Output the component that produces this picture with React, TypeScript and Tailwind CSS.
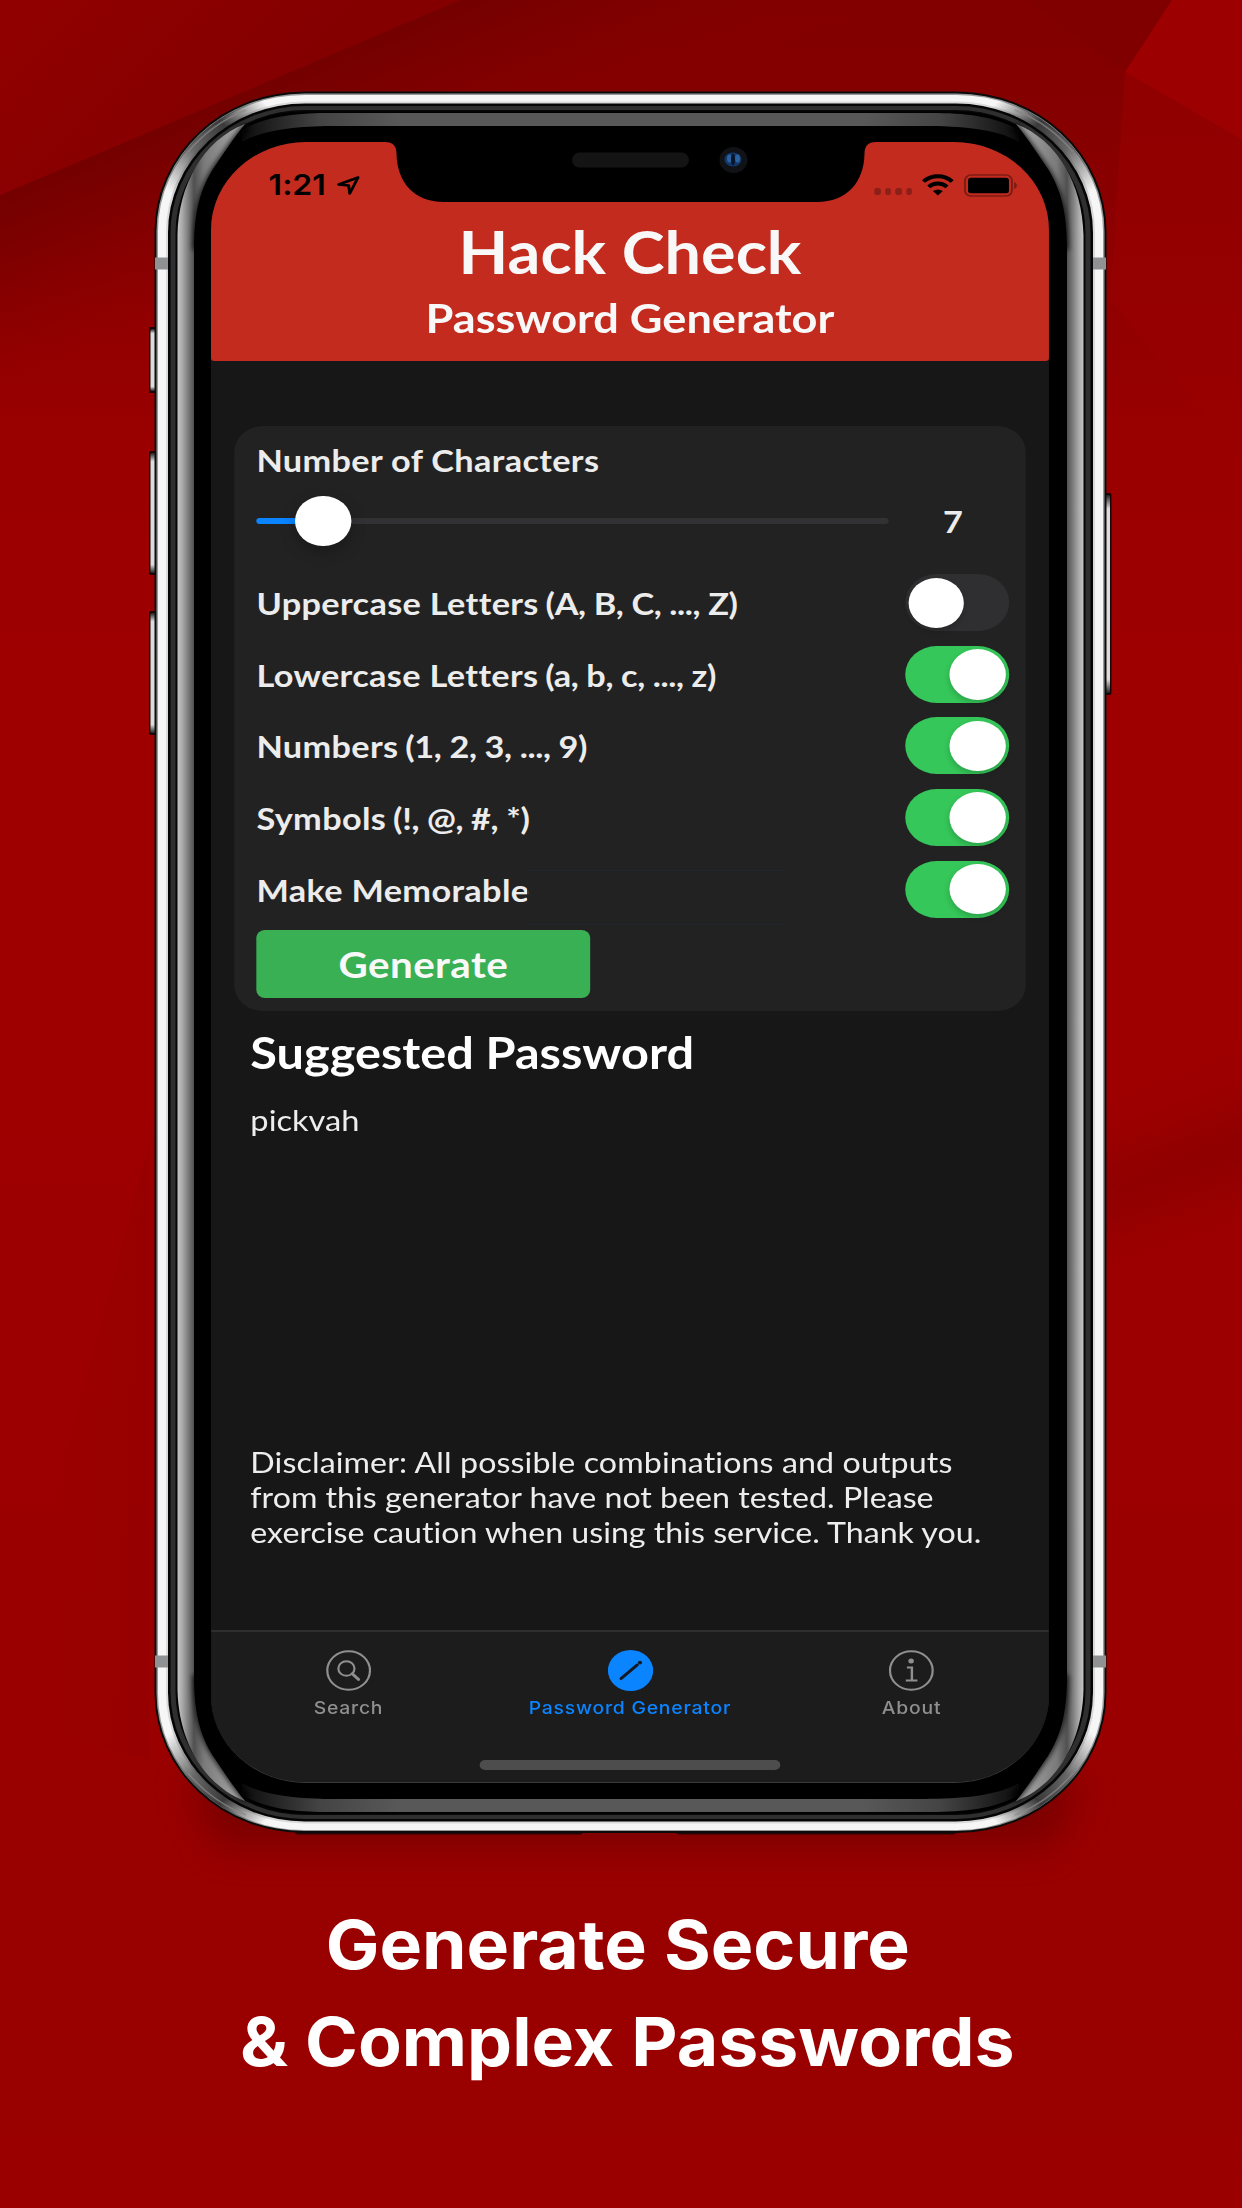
import React, { useState } from "react";

function Backdrop() {
  return (
    <svg className="absolute inset-0" width="1242" height="2208" viewBox="0 0 1242 2208" aria-hidden="true">
      <defs>
        <linearGradient id="base" x1="0" y1="0" x2="0" y2="1">
          <stop offset="0" stopColor="#820000" />
          <stop offset="0.05" stopColor="#850000" />
          <stop offset="0.12" stopColor="#8e0000" />
          <stop offset="0.2" stopColor="#9a0000" />
          <stop offset="0.3" stopColor="#9e0000" />
          <stop offset="0.5" stopColor="#9e0000" />
          <stop offset="0.85" stopColor="#990000" />
          <stop offset="1" stopColor="#9a0000" />
        </linearGradient>
        <linearGradient id="foldA" gradientUnits="userSpaceOnUse" x1="30" y1="0" x2="200" y2="170">
          <stop offset="0" stopColor="#910000" />
          <stop offset="1" stopColor="#840000" />
        </linearGradient>
        <linearGradient id="foldB" gradientUnits="userSpaceOnUse" x1="230" y1="97" x2="300" y2="262">
          <stop offset="0" stopColor="#740000" />
          <stop offset="0.35" stopColor="#7c0000" stopOpacity="0.8" />
          <stop offset="1" stopColor="#8a0000" stopOpacity="0" />
        </linearGradient>
        <linearGradient id="foldE" x1="0" y1="0" x2="1" y2="0">
          <stop offset="0" stopColor="#9e0000" stopOpacity="0" />
          <stop offset="1" stopColor="#930000" />
        </linearGradient>
        <filter id="shade" x="-20%" y="-200%" width="140%" height="500%">
          <feGaussianBlur stdDeviation="18" />
        </filter>
        <filter id="soft" x="-60%" y="-60%" width="220%" height="220%">
          <feGaussianBlur stdDeviation="28" />
        </filter>
      </defs>
      <rect width="1242" height="2208" fill="url(#base)" />
      <path d="M0 195L460 0H900V460H0Z" fill="url(#foldB)" />
      <path d="M0 0H460L0 195Z" fill="url(#foldA)" />
      <path d="M1025 0L1125 72L1172 0Z" fill="#800000" opacity="0.8" />
      <path d="M1172 0H1242V140L1125 72Z" fill="#9c0000" />
      <path d="M1125 72L1242 140V460L1110 300Z" fill="#9a0000" opacity="0.6" />
      <path d="M1060 1180L1300 1090V1160L1060 1240Z" fill="#880000" opacity="0.8" filter="url(#soft)" />
      <path d="M0 1700L150 1140V1760L0 1720Z" fill="url(#foldE)" opacity="0.6" />
      <path d="M185 1780H1085L1050 1846H220Z" fill="#6e0000" opacity="0.7" filter="url(#shade)" />
    </svg>
  );
}

function SideHighlight() {
  return (
    <g>
      <path
        d="M177.500 235C178.500 185 203 140 245 124C232 140 222 156 213 169C200 190 194 212 194 250V1675C194 1713 200 1735 213 1756C222 1769 232 1785 245 1801C203 1785 178.500 1740 177.500 1690Z"
        fill="url(#side)"
      />
      <g fill="none" stroke="#000" strokeWidth="9" opacity="0.75" filter="url(#feather)">
        <path d="M247 126C234 142 224 158 215 171C202 192 197 212 197 250" />
        <path d="M247 1799C234 1783 224 1767 215 1754C202 1733 197 1713 197 1675" />
      </g>
    </g>
  );
}

function TopHighlight() {
  return <path d="M242 130C266 116 296 113 330 113H931C965 113 995 116 1019 130V142C998 129 960 126 925 126H336C301 126 263 129 242 142Z" fill="url(#topFade)" />;
}

function CornerShade() {
  return (
    <g fill="none">
      <path d="M167 198A143 133 0 0 1 268 104" stroke="url(#corner)" strokeWidth="11" />
      <path d="M188 152A146 136 0 0 1 246 110" stroke="#8a8a8a" strokeWidth="1.500" opacity="0.7" />
    </g>
  );
}

function PhoneBody() {
  return (
    <svg className="absolute inset-0" width="1242" height="2208" viewBox="0 0 1242 2208" aria-hidden="true">
      <defs>
        <filter id="feather" x="-100%" y="-20%" width="300%" height="140%">
          <feGaussianBlur stdDeviation="2.500" />
        </filter>
        <linearGradient id="side" gradientUnits="userSpaceOnUse" x1="177" y1="0" x2="245" y2="0">
          <stop offset="0" stopColor="#c8c8c8" />
          <stop offset="0.08" stopColor="#a8a8a8" />
          <stop offset="0.25" stopColor="#505050" />
          <stop offset="0.4" stopColor="#7a7a7a" />
          <stop offset="1" stopColor="#b0b0b0" />
        </linearGradient>
        <linearGradient id="topFade" gradientUnits="userSpaceOnUse" x1="242" y1="0" x2="1019" y2="0">
          <stop offset="0" stopColor="#0c0c0c" />
          <stop offset="0.1" stopColor="#444" />
          <stop offset="0.2" stopColor="#585858" />
          <stop offset="0.8" stopColor="#585858" />
          <stop offset="0.9" stopColor="#444" />
          <stop offset="1" stopColor="#0c0c0c" />
        </linearGradient>
        <linearGradient id="corner" gradientUnits="userSpaceOnUse" x1="168" y1="190" x2="266" y2="104">
          <stop offset="0" stopColor="#3a3a3a" stopOpacity="0" />
          <stop offset="0.35" stopColor="#3a3a3a" stopOpacity="0.75" />
          <stop offset="0.65" stopColor="#3a3a3a" stopOpacity="1" />
          <stop offset="1" stopColor="#3a3a3a" stopOpacity="0" />
        </linearGradient>
        <linearGradient id="key" x1="0" y1="0" x2="0" y2="1">
          <stop offset="0" stopColor="#222" />
          <stop offset="0.07" stopColor="#dcdcdc" />
          <stop offset="0.93" stopColor="#dcdcdc" />
          <stop offset="1" stopColor="#222" />
        </linearGradient>
      </defs>
      {[[327, 66], [451, 124], [611, 124]].map(([y, h]) => (
        <g key={y}>
          <rect x="149" y={y} width="9" height={h} rx="2" fill="#1a0606" />
          <rect x="150.500" y={y + 2} width="5.500" height={h - 4} rx="1.500" fill="url(#key)" />
        </g>
      ))}
      <rect x="1102" y="493" width="9.500" height="202" rx="2" fill="#1a0606" />
      <rect x="1105" y="495" width="5" height="198" rx="1.500" fill="url(#key)" />
      <rect x="295" y="1826" width="288" height="8.500" rx="3" fill="#2a0505" />
      <rect x="676" y="1826" width="280" height="8.500" rx="3" fill="#2a0505" />

      <rect x="154.500" y="91.500" width="952" height="1741.500" rx="150" ry="140" fill="#0b0b0b" />
      <rect x="156.500" y="93.500" width="948" height="1737.500" rx="148" ry="138" fill="#9a9a9a" />
      <rect x="158" y="95" width="945" height="1735" rx="146.500" ry="136.500" fill="#f6f6f6" />
      <rect x="166" y="101.500" width="929" height="1722" rx="139" ry="130" fill="#dadada" />
      <CornerShade />
      <g transform="matrix(-1 0 0 1 1261 0)"><CornerShade /></g>
      <g transform="matrix(1 0 0 -1 0 1925)"><CornerShade /></g>
      <g transform="matrix(-1 0 0 -1 1261 1925)"><CornerShade /></g>
      <rect x="155" y="257.500" width="14" height="12" fill="#909192" />
      <rect x="1092" y="257.500" width="14" height="12" fill="#909192" />
      <rect x="155" y="1655.500" width="14" height="12" fill="#909192" />
      <rect x="1092" y="1655.500" width="14" height="12" fill="#909192" />
      <rect x="168" y="103.500" width="925" height="1718" rx="137" ry="129" fill="#050505" />
      <rect x="170.500" y="106" width="920" height="1713" rx="134" ry="127" fill="#2f2f2f" />
      <rect x="175.500" y="110" width="910" height="1705" rx="130" ry="123" fill="#060606" />
      <rect x="177" y="111.500" width="907" height="1702" rx="128" ry="121" fill="#000" />
      <TopHighlight />
      <g transform="matrix(1 0 0 -1 0 1925)"><TopHighlight /></g>
      <SideHighlight />
      <g transform="matrix(-1 0 0 1 1261 0)"><SideHighlight /></g>
    </svg>
  );
}

function Notch() {
  return (
    <svg className="absolute left-[380px] top-[138px]" width="501" height="70" viewBox="380 138 501 70" aria-hidden="true">
      <path d="M380 138V142H385C393 142 396.500 146 396.500 154C397 182 414 202 444 202H817C847 202 864 182 864.500 154C864.500 146 868 142 876 142H881V138Z" fill="#000" />
      <rect x="572" y="152.500" width="117" height="15" rx="7.500" fill="#141414" />
      <ellipse cx="733.500" cy="160" rx="14" ry="13" fill="#111216" />
      <ellipse cx="733" cy="159.500" rx="8.500" ry="7" fill="#12386b" />
      <ellipse cx="729.500" cy="158.500" rx="2.500" ry="4" fill="#2a62a0" />
      <ellipse cx="737.500" cy="158.500" rx="2.500" ry="4" fill="#2a62a0" />
      <ellipse cx="733" cy="159.500" rx="2" ry="6" fill="#081427" />
    </svg>
  );
}

function StatusBar() {
  return (
    <div className="flex h-[82px] items-end pb-[26px] pl-[52px] pr-[27px] text-black">
      <span className="w-[52px] font-[Inter] text-[29px] font-semibold leading-[26px]">1:21</span>
      <svg className="ml-[9.500px] mb-[3px]" width="21" height="19" viewBox="0 0 21 19" fill="none" stroke="#000" strokeWidth="2.600" strokeLinejoin="round">
        <path d="M19 1.500L1.500 8.500L10.500 9.500L11.500 17.500Z" />
      </svg>
      <div className="ml-auto flex items-end gap-[4px] pb-[3px] pr-[9px]">
        {[0, 1, 2, 3].map((i) => (
          <span key={i} className="h-[7px] w-[5.500px] rounded-[2px] bg-[#8c1f17]" />
        ))}
      </div>
      <svg className="mb-[2px]" width="29" height="22" viewBox="0 0 29 22" fill="none" stroke="#000" strokeWidth="3.800">
        <path d="M1.500 7.500C8.500 0.500 20.500 0.500 27.500 7.500" />
        <path d="M6.200 12.800C10.700 8.400 18.300 8.400 22.800 12.800" />
        <path d="M10 17Q14.500 13.800 19 17L14.500 21.500Z" fill="#000" stroke="none" />
      </svg>
      <svg className="ml-[9px] mb-[1px]" width="50" height="23" viewBox="0 0 50 23">
        <rect x="1" y="1" width="42.500" height="21" rx="5.500" fill="none" stroke="#7c1b14" strokeWidth="1.700" />
        <rect x="3.800" y="3.800" width="37" height="15.400" rx="2.500" fill="#000" />
        <path d="M45.500 8C48.800 9 48.800 14 45.500 15Z" fill="#7c1b14" />
      </svg>
    </div>
  );
}

function Toggle({ on, onClick }: { on: boolean; onClick: () => void }) {
  return (
    <button
      role="switch"
      aria-checked={on}
      onClick={onClick}
      className={
        on
          ? "flex h-[57px] w-[94px] items-center justify-end rounded-full bg-[#35c759] px-[3px]"
          : "flex h-[57px] w-[94px] items-center justify-start rounded-full bg-[#2f2f31] px-[3px]"
      }
    >
      <span className="h-[50.500px] w-[50.500px] rounded-full bg-white shadow-[0_3px_6px_rgba(0,0,0,0.2)]" />
    </button>
  );
}

const OPTIONS: [string, string, boolean][] = [
  ["Uppercase Letters", "(A, B, C, ..., Z)", false],
  ["Lowercase Letters", "(a, b, c, ..., z)", true],
  ["Numbers", "(1, 2, 3, ..., 9)", true],
  ["Symbols", "(!, @, #, *)", true],
  ["Make Memorable", "", true],
];

function OptionsCard() {
  const [flags, setFlags] = useState(OPTIONS.map((o) => o[2]));
  return (
    <section className="relative ml-[20.800px] mt-[65px] h-[585px] w-[716px] rounded-[26px] bg-[#222] pl-[20.300px] pr-[15px] text-[#ececec]">
      <div className="flex h-[69px] items-center text-[31px] font-bold leading-none tracking-[0.31px]">
        <h3>Number of Characters</h3>
      </div>
      <div className="flex h-[52px] items-center">
        <div className="relative h-[6px] w-[572px] rounded-full bg-[#323234]">
          <div className="h-[6px] w-[50px] rounded-full bg-[#0a84ff]" />
          <div className="absolute left-[35px] top-[-22px] h-[50px] w-[50.500px] rounded-full bg-white shadow-[0_6px_14px_rgba(0,0,0,0.25)]" />
        </div>
        <span className="ml-[49px] text-[31px] font-bold leading-none">7</span>
      </div>
      <div className="pt-[20px]">
        {OPTIONS.map(([label, hint], i) => (
          <div key={label} className="flex h-[71.600px] items-center justify-between">
            <span className="pt-[2px] text-[31px] font-bold leading-none">
              <span className="tracking-[0.31px]">{label}</span>
              <span className="ml-[6.200px] tracking-[-0.340px]">{hint}</span>
            </span>
            <Toggle on={flags[i]} onClick={() => setFlags(flags.map((f, j) => (j === i ? !f : f)))} />
          </div>
        ))}
      </div>
      <button className="mt-[5px] flex h-[68px] w-[302px] items-center justify-center rounded-[8px] bg-[#3ab055] text-[36.500px] font-bold leading-none tracking-[0.4px] text-[#f8f8f8]">
        Generate
      </button>
      <div className="absolute left-[265.500px] top-[443.500px] h-[55px] w-[234px] border border-[#20252e]" />
    </section>
  );
}

function TabBar() {
  return (
    <nav className="h-[152px] border-t-2 border-[#2e2e2e] bg-[#1c1c1c] font-[Inter] text-[17.500px] font-medium leading-none tracking-[0.7px] text-[#8f8f8f]">
      <div className="-mx-[3px] flex pt-[17.500px]">
        <div className="flex flex-1 flex-col items-center gap-[8.500px]">
          <svg width="41" height="41" viewBox="0 0 41 41" fill="none" stroke="currentColor" strokeWidth="2">
            <circle cx="20.500" cy="20.500" r="19.300" />
            <circle cx="18.500" cy="18.500" r="7.300" />
            <path d="M23.800 23.800L29.500 29.500" strokeWidth="2.800" strokeLinecap="round" />
          </svg>
          <span>Search</span>
        </div>
        <div className="flex flex-1 flex-col items-center gap-[8.500px] text-[#0a84ff]">
          <svg width="41" height="41" viewBox="0 0 41 41">
            <circle cx="20.500" cy="20.500" r="20.500" fill="currentColor" />
            <path d="M12 28.500L26.500 15" stroke="#141a22" strokeWidth="3" strokeLinecap="round" />
            <circle cx="29" cy="12.600" r="1.900" fill="#141a22" />
          </svg>
          <span>Password Generator</span>
        </div>
        <div className="flex flex-1 flex-col items-center gap-[8.500px]">
          <svg width="41" height="41" viewBox="0 0 41 41" fill="none" stroke="currentColor" strokeWidth="2">
            <circle cx="20.500" cy="20.500" r="19.300" />
            <circle cx="20.300" cy="11" r="2.500" fill="currentColor" stroke="none" />
            <path d="M16.500 17.500H21V30.500M15.500 30.500H26" strokeWidth="2.200" />
          </svg>
          <span>About</span>
        </div>
      </div>
      <div className="mx-auto mt-[43px] h-[10px] w-[272px] rounded-full bg-[#4d4d4d]" />
    </nav>
  );
}

function Screen() {
  return (
    <div className="flex h-[1641px] w-[758px] origin-left scale-x-[1.1055] flex-col overflow-hidden rounded-[86px/88px] border-b border-[#3a3a3a] bg-[#171717] font-[Lato] [font-variant-ligatures:none]">
      <header className="h-[219px] rounded-b-[3px] bg-[#c42b1f] text-center font-bold text-[#f8f8f8]">
        <StatusBar />
        <h1 className="-mt-[3px] text-[58.500px] leading-[60px]">Hack Check</h1>
        <h2 className="mt-[16px] text-[40.800px] leading-[41px]">Password Generator</h2>
      </header>
      <OptionsCard />
      <div className="pl-[35.600px] text-[#ededed]">
        <h2 className="mt-[16.500px] text-[44px] font-bold leading-[48px] text-white">Suggested Password</h2>
        <p className="mt-[26.500px] text-[29.500px] leading-[35px]">pickvah</p>
        <p className="mt-[306.500px] whitespace-nowrap text-[29.100px] leading-[35px]">
          <span className="tracking-[0.1px]">Disclaimer: All possible combinations and outputs</span>
          <br />
          from this generator have not been tested. Please
          <br />
          exercise caution when using this service. Thank you.
        </p>
      </div>
      <div className="mt-auto">
        <TabBar />
      </div>
    </div>
  );
}

export default function App() {
  return (
    <main className="relative h-[2208px] w-[1242px] overflow-hidden bg-[#9c0000]">
      <Backdrop />
      <PhoneBody />
      <div className="relative pl-[211px] pt-[142px]">
        <Screen />
      </div>
      <Notch />
      <div className="relative mt-[113px] scale-x-[1.052] text-center font-[Inter] text-[68px] font-bold leading-[97px] text-white">
        <p className="pr-[6px]">Generate Secure</p>
        <p className="pl-[12px]">&amp; Complex Passwords</p>
      </div>
    </main>
  );
}
